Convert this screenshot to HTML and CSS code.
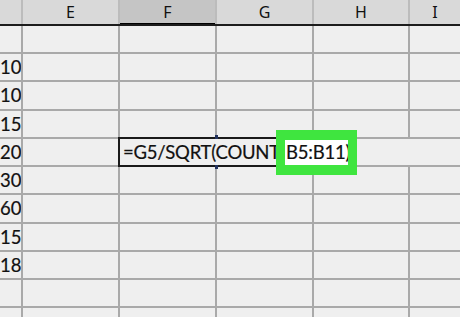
FILE: index.html
```html
<!DOCTYPE html>
<html>
<head>
<meta charset="utf-8">
<link rel="stylesheet" href="styles.css">
</head>
<body>
<div class="sheet">
  <div class="head">
    <div class="hcell"></div>
    <div class="hcell">E</div>
    <div class="hcell hsel">F</div>
    <div class="hcell">G</div>
    <div class="hcell">H</div>
    <div class="hcell">I</div>
  </div>
  <div class="body">
    <div class="cell num"></div><div class="cell"></div><div class="cell"></div><div class="cell"></div><div class="cell"></div><div class="cell"></div>
    <div class="cell num">10</div><div class="cell"></div><div class="cell"></div><div class="cell"></div><div class="cell"></div><div class="cell"></div>
    <div class="cell num">10</div><div class="cell"></div><div class="cell"></div><div class="cell"></div><div class="cell"></div><div class="cell"></div>
    <div class="cell num">15</div><div class="cell"></div><div class="cell"></div><div class="cell"></div><div class="cell"></div><div class="cell"></div>
    <div class="cell num">20</div><div class="cell"></div><div class="cell span4"></div>
    <div class="cell num">30</div><div class="cell"></div><div class="cell"></div><div class="cell"></div><div class="cell"></div><div class="cell"></div>
    <div class="cell num">60</div><div class="cell"></div><div class="cell"></div><div class="cell"></div><div class="cell"></div><div class="cell"></div>
    <div class="cell num">15</div><div class="cell"></div><div class="cell"></div><div class="cell"></div><div class="cell"></div><div class="cell"></div>
    <div class="cell num">18</div><div class="cell"></div><div class="cell"></div><div class="cell"></div><div class="cell"></div><div class="cell"></div>
    <div class="cell num"></div><div class="cell"></div><div class="cell"></div><div class="cell"></div><div class="cell"></div><div class="cell"></div>
    <div class="cell num"></div><div class="cell"></div><div class="cell"></div><div class="cell"></div><div class="cell"></div><div class="cell"></div>
  </div>
  <div class="editbox">=G5/SQRT(COUNT</div>
  <div class="handle handle-top"></div>
  <div class="handle handle-bottom"></div>
  <div class="highlight"><span class="hl-text">B5:B11)</span></div>
</div>
</body>
</html>
```

FILE: styles.css
```css
html, body {
  margin: 0;
  padding: 0;
  background: #efefef;
  overflow: hidden;
}
.sheet {
  position: relative;
  width: 460px;
  height: 317px;
  overflow: hidden;
  display: flex;
  flex-direction: column;
  font-family: Lato, "Liberation Sans", sans-serif;
  color: #111;
}
.head {
  display: grid;
  grid-template-columns: 21px 95px 95px 95px 94px 1fr;
  column-gap: 2px;
  height: 24px;
  background: #bcbcbc;
  border-bottom: 2px solid #1c1c1c;
  flex: none;
}
.hcell {
  background: #d9d9d9;
  font-family: "Noto Sans", "Open Sans", sans-serif;
  font-size: 16px;
  line-height: 24px;
  text-align: center;
  color: #111;
}
.hsel {
  background: #c5c5c5;
  box-shadow: inset 0 -1px 0 #000;
}
.body {
  display: grid;
  grid-template-columns: 21px 95px 95px 95px 94px 1fr;
  grid-template-rows: 26px 26px 27px 26px 26px 26px 27px 26px 26px 26px 26px;
  gap: 2px;
  background: #a9a9a9;
  flex: 1;
}
.cell {
  background: #efefef;
  font-size: 18.5px;
  line-height: 26px;
  white-space: nowrap;
  overflow: hidden;
  -webkit-text-stroke: 0.2px #111;
}
.num {
  text-align: right;
  padding-right: 2px;
}
.span4 {
  grid-column: span 4;
}
.editbox {
  position: absolute;
  left: 118px;
  top: 137px;
  width: 160px;
  height: 26px;
  border: 2px solid #1a1a1a;
  background: #efefef;
  font-size: 18.5px;
  letter-spacing: -0.25px;
  line-height: 26px;
  padding-left: 3px;
  white-space: nowrap;
  -webkit-text-stroke: 0.2px #111;
}
.handle {
  position: absolute;
  left: 215px;
  width: 3px;
  height: 4px;
  background: #22325e;
}
.handle-top { top: 135px; }
.handle-bottom { top: 165px; }
.highlight {
  position: absolute;
  left: 276px;
  top: 130px;
  width: 63px;
  height: 25px;
  border-style: solid;
  border-color: #3fe53f;
  border-width: 10px 9px 10px 9px;
  background: #ffffff;
  overflow: hidden;
  white-space: nowrap;
}
.hl-text {
  display: block;
  font-size: 18.5px;
  letter-spacing: -0.2px;
  line-height: 26px;
  margin-top: -1px;
  padding-left: 1px;
  -webkit-text-stroke: 0.2px #111;
}
```
